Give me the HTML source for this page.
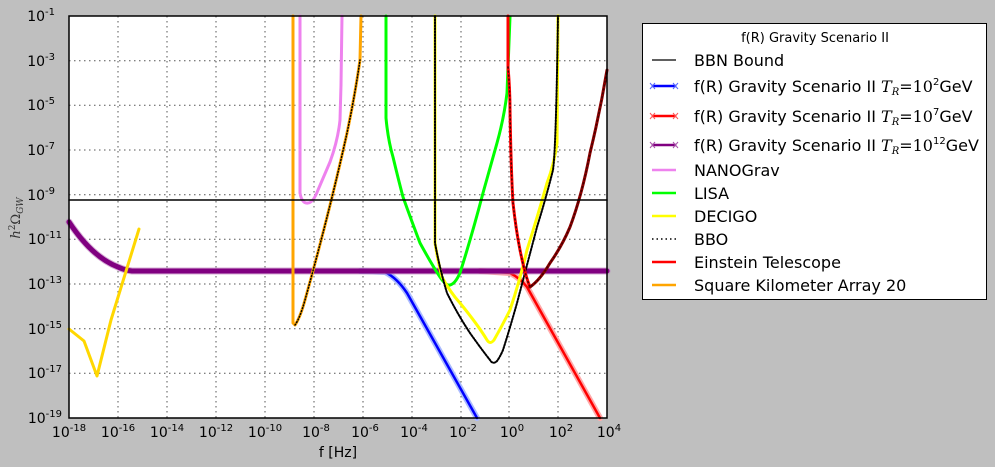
<!DOCTYPE html>
<html><head><meta charset="utf-8"><style>
html,body{margin:0;padding:0;background:#bfbfbf;}
svg{display:block;}
text{font-family:"DejaVu Sans","Liberation Sans",sans-serif;fill:#000;}
.t{font-size:14px;}
.s{font-size:10px;}
.lg{font-size:16px;}
</style></head><body>
<svg width="995" height="467" viewBox="0 0 995 467" xmlns="http://www.w3.org/2000/svg">
<rect x="0" y="0" width="995" height="467" fill="#bfbfbf"/>
<rect x="69" y="16" width="538" height="402" fill="#fff"/>
<g stroke="#555" stroke-width="1" stroke-dasharray="1.5,3.5" fill="none">
<path d="M118 16V418M167 16V418M216 16V418M265 16V418M314 16V418M363 16V418M412 16V418M461 16V418M509 16V418M558 16V418"/>
<path d="M69 60.7H607M69 105.3H607M69 150H607M69 194.7H607M69 239.3H607M69 284H607M69 328.7H607M69 373.3H607"/>
</g>
<g fill="none" stroke-linejoin="round" stroke-linecap="round">
<!-- blue -->
<path d="M360 271 L385 272 Q397 278 407 293 L477 418" stroke="#aabbff" stroke-width="6"/>
<path d="M360 271 L385 272 Q397 278 407 293 L477 418" stroke="#0000ff" stroke-width="2.5"/>
<!-- red scenario -->
<path d="M480 271 L510 273 Q520 278 527 287 L600 418" stroke="#ffaaaa" stroke-width="6"/>
<path d="M480 271 L510 273 Q520 278 527 287 L600 418" stroke="#ff0000" stroke-width="2.5"/>
<!-- purple -->
<path d="M69 222 Q92 257 118 267 Q124 270 132 271 L607 271" stroke="#bb77bb" stroke-width="7" opacity="0.6"/>
<path d="M69 222 Q92 257 118 267 Q124 270 132 271 L607 271" stroke="#800080" stroke-width="5"/>
<!-- gold lower-left -->
<polyline points="69,329 84,341 97,376 111,320 139,229" stroke="#ffd700" stroke-width="3"/>
<!-- pink nanograv -->
<path d="M300 16 L300 193 Q302 204 308 203 Q313 203 318 190 L330 162 Q338 140 340 120 L341 85 L342 16" stroke="#ee82ee" stroke-width="3"/>
<!-- orange SKA -->
<path d="M293 16 L293 323 L295 325 Q300 318 305 300 Q330 210 347 133 Q355 95 360 60 L361 16" stroke="#ffa500" stroke-width="3"/>
<path d="M295 325 Q300 318 305 300 Q330 210 347 133 Q355 95 360 60" stroke="#000" stroke-width="1.5" stroke-dasharray="1,2"/>
<!-- LISA -->
<path d="M386 16 L386 118 Q388 140 393 157 Q398 178 403 197 Q412 222 420 243 Q432 265 440 277 Q446 286 450 285 Q455 284 460 273 Q472 235 483 193 Q490 168 497 143 Q504 118 507 93 L510 17" stroke="#00ff00" stroke-width="3"/>
<!-- DECIGO -->
<path d="M435 16 L435 243 Q438 262 442 277 Q450 292 460 303 Q478 325 487 340 Q490 345 494 340 Q502 326 510 310 Q520 280 527 250 Q538 215 547 183 Q554 165 557 143 L558 16" stroke="#ffff00" stroke-width="3"/>
<!-- BBO -->
<path d="M435 16 L435 243 Q440 270 447 293 Q458 315 470 333 Q482 350 490 360 Q493 365 497 361 Q500 357 503 350 Q510 328 517 303 Q527 265 537 227 Q546 198 553 170 Q556 150 558 16" stroke="#000" stroke-width="2" stroke-dasharray="1.5,1.5"/>
<!-- Einstein telescope -->
<path d="M508 16 L508 67 Q510 90 510 110 Q511 170 513 203 Q516 230 520 250 Q525 275 530 287" stroke="#ff0000" stroke-width="3"/>
<path d="M530 287 Q540 280 550 263 Q562 246 570 227 Q582 195 590 153 Q600 112 607 70" stroke="#8b0000" stroke-width="3"/>
<path d="M508 67 Q510 90 510 110 Q511 170 513 203 Q516 230 520 250 Q525 275 530 287 Q540 280 550 263 Q562 246 570 227 Q582 195 590 153 Q600 112 607 70" stroke="#400" stroke-width="1.5" stroke-dasharray="1,3"/>
<!-- BBN -->
<line x1="69" y1="200" x2="607" y2="200" stroke="#000" stroke-width="1.5"/>
</g>
<rect x="69" y="16" width="538" height="402" fill="none" stroke="#000" stroke-width="1.5"/>
<g class="t" text-anchor="end">
<text x="55" y="21">10<tspan class="s" dy="-6">-1</tspan></text>
<text x="55" y="66">10<tspan class="s" dy="-6">-3</tspan></text>
<text x="55" y="110">10<tspan class="s" dy="-6">-5</tspan></text>
<text x="55" y="155">10<tspan class="s" dy="-6">-7</tspan></text>
<text x="55" y="200">10<tspan class="s" dy="-6">-9</tspan></text>
<text x="62" y="244">10<tspan class="s" dy="-6">-11</tspan></text>
<text x="62" y="289">10<tspan class="s" dy="-6">-13</tspan></text>
<text x="62" y="334">10<tspan class="s" dy="-6">-15</tspan></text>
<text x="62" y="378">10<tspan class="s" dy="-6">-17</tspan></text>
<text x="62" y="423">10<tspan class="s" dy="-6">-19</tspan></text>
</g>
<g class="t" text-anchor="middle">
<text x="69" y="437">10<tspan class="s" dy="-6">-18</tspan></text>
<text x="118" y="437">10<tspan class="s" dy="-6">-16</tspan></text>
<text x="167" y="437">10<tspan class="s" dy="-6">-14</tspan></text>
<text x="216" y="437">10<tspan class="s" dy="-6">-12</tspan></text>
<text x="265" y="437">10<tspan class="s" dy="-6">-10</tspan></text>
<text x="316" y="437">10<tspan class="s" dy="-6">-8</tspan></text>
<text x="365" y="437">10<tspan class="s" dy="-6">-6</tspan></text>
<text x="414" y="437">10<tspan class="s" dy="-6">-4</tspan></text>
<text x="463" y="437">10<tspan class="s" dy="-6">-2</tspan></text>
<text x="512" y="437">10<tspan class="s" dy="-6">0</tspan></text>
<text x="561" y="437">10<tspan class="s" dy="-6">2</tspan></text>
<text x="609" y="437">10<tspan class="s" dy="-6">4</tspan></text>
<text x="338" y="457">f [Hz]</text>
</g>
<text transform="translate(20,218) rotate(-90)" text-anchor="middle" style="font-family:'DejaVu Serif','Liberation Serif',serif;font-size:13px;font-style:italic;fill:#333">h<tspan style="font-size:9px;font-style:normal" dy="-5">2</tspan><tspan dy="5" style="font-style:normal">Ω</tspan><tspan style="font-size:9px" dy="3">GW</tspan></text>
<rect x="642.5" y="23.5" width="344" height="276" fill="#fff" stroke="#000" stroke-width="1"/>
<text x="815" y="42" text-anchor="middle" style="font-size:13px">f(R) Gravity Scenario II</text>
<g fill="none" stroke-width="2.5">
<line x1="652" y1="60" x2="676" y2="60" stroke="#000" stroke-width="1.2"/>
<line x1="652" y1="86" x2="676" y2="86" stroke="#0000ff"/>
<line x1="652" y1="116" x2="676" y2="116" stroke="#ff0000"/>
<line x1="652" y1="145" x2="676" y2="145" stroke="#800080"/>
<line x1="652" y1="170" x2="676" y2="170" stroke="#ee82ee"/>
<line x1="652" y1="193" x2="676" y2="193" stroke="#00ff00"/>
<line x1="652" y1="216" x2="676" y2="216" stroke="#ffff00"/>
<line x1="652" y1="239" x2="676" y2="239" stroke="#000" stroke-width="1.5" stroke-dasharray="1.5,3"/>
<line x1="652" y1="262" x2="676" y2="262" stroke="#ff0000"/>
<line x1="652" y1="285" x2="676" y2="285" stroke="#ffa500"/>
<g stroke-width="1">
<path d="M650 83l5 6M650 89l5 -6M673 83l5 6M673 89l5 -6" stroke="#5566ff"/>
<path d="M650 113l5 6M650 119l5 -6M673 113l5 6M673 119l5 -6" stroke="#ff5555"/>
<path d="M650 142l5 6M650 148l5 -6M673 142l5 6M673 148l5 -6" stroke="#aa55aa"/>
</g>
</g>
<g class="lg">
<text x="694" y="66">BBN Bound</text>
<text x="694" y="92">f(R) Gravity Scenario II <tspan style="font-family:'DejaVu Serif',serif;font-style:italic">T</tspan><tspan style="font-family:'DejaVu Serif',serif;font-style:italic;font-size:10px" dy="3">R</tspan><tspan style="font-family:'DejaVu Serif',serif" dy="-3">=10</tspan><tspan style="font-size:10px" dy="-7">2</tspan><tspan dy="7">GeV</tspan></text>
<text x="694" y="122">f(R) Gravity Scenario II <tspan style="font-family:'DejaVu Serif',serif;font-style:italic">T</tspan><tspan style="font-family:'DejaVu Serif',serif;font-style:italic;font-size:10px" dy="3">R</tspan><tspan style="font-family:'DejaVu Serif',serif" dy="-3">=10</tspan><tspan style="font-size:10px" dy="-7">7</tspan><tspan dy="7">GeV</tspan></text>
<text x="694" y="151">f(R) Gravity Scenario II <tspan style="font-family:'DejaVu Serif',serif;font-style:italic">T</tspan><tspan style="font-family:'DejaVu Serif',serif;font-style:italic;font-size:10px" dy="3">R</tspan><tspan style="font-family:'DejaVu Serif',serif" dy="-3">=10</tspan><tspan style="font-size:10px" dy="-7">12</tspan><tspan dy="7">GeV</tspan></text>
<text x="694" y="176">NANOGrav</text>
<text x="694" y="199">LISA</text>
<text x="694" y="222">DECIGO</text>
<text x="694" y="245">BBO</text>
<text x="694" y="268">Einstein Telescope</text>
<text x="694" y="291">Square Kilometer Array 20</text>
</g>
</svg>
</body></html>
